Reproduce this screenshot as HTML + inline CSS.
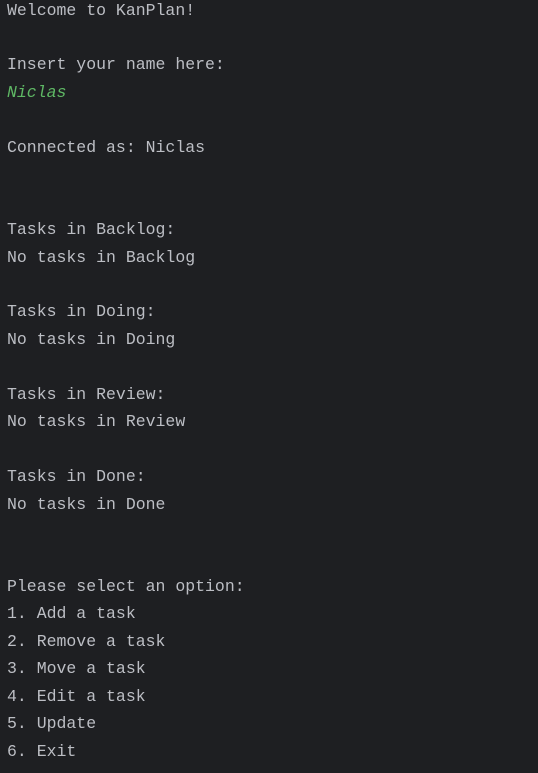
<!DOCTYPE html>
<html><head><meta charset="utf-8"><style>
html,body{margin:0;padding:0;background:#1e1f22;width:538px;height:773px;overflow:hidden}
pre{position:absolute;left:7px;top:-3.5px;margin:0;font-family:"Liberation Mono","DejaVu Sans Mono",monospace;font-size:16.5px;line-height:27.45px;color:#bcbec4}
i{color:#5fb865;font-style:italic}
</style></head><body><pre>Welcome to KanPlan!

Insert your name here:
<i>Niclas</i>

Connected as: Niclas


Tasks in Backlog:
No tasks in Backlog

Tasks in Doing:
No tasks in Doing

Tasks in Review:
No tasks in Review

Tasks in Done:
No tasks in Done


Please select an option:
1. Add a task
2. Remove a task
3. Move a task
4. Edit a task
5. Update
6. Exit</pre></body></html>
